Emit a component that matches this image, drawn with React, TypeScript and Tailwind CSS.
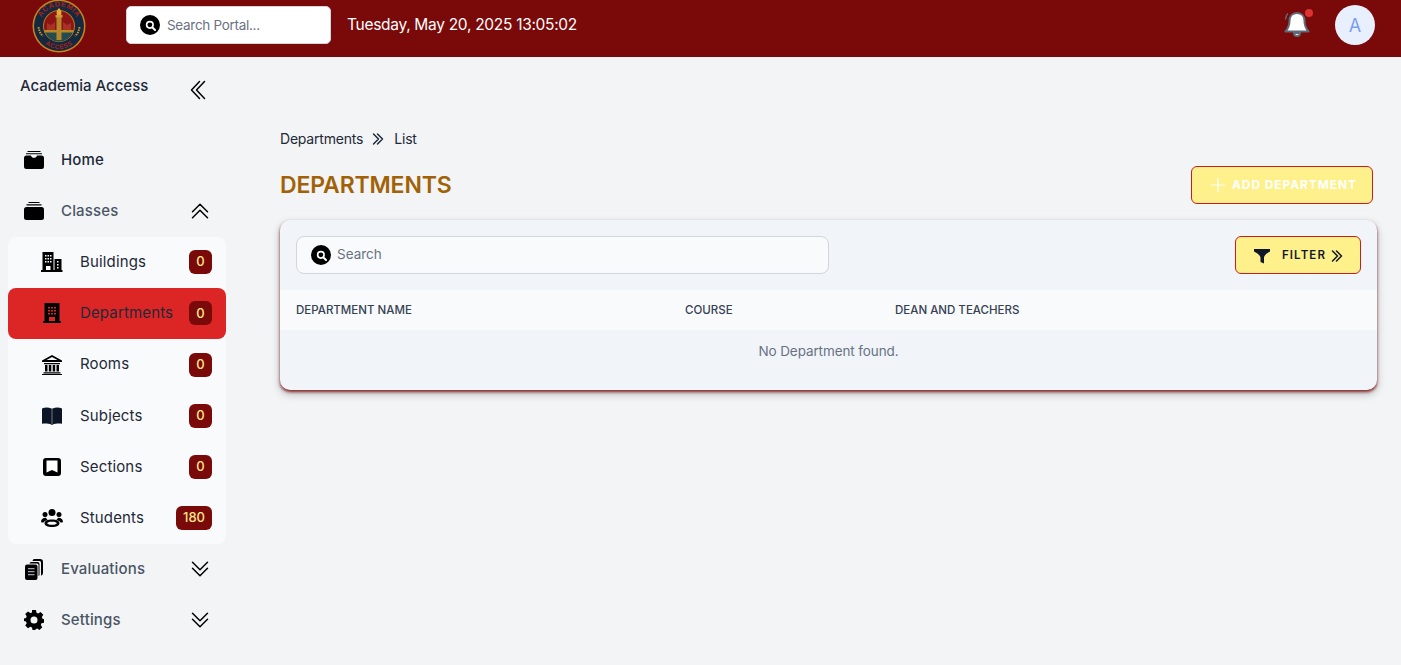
import { Plus } from 'lucide-react';
import { ReactNode } from 'react';

function Chevrons({ d, className, thick }: { d: string; className: string; thick?: boolean }) {
  return (
    <svg viewBox="0 0 24 24" className={className} fill="none" stroke="currentColor" strokeWidth={thick ? 2.2 : 1.5} strokeLinecap="round" strokeLinejoin="round">
      <path d={d} />
    </svg>
  );
}

const CHEV_LEFT = 'M12.500 3.500 4.500 12l8 8.500m5-17-8 8.500 8 8.500';
const CHEV_UP = 'M4.500 12.750 12 5.250l7.500 7.500m-15 6 7.500-7.500 7.500 7.500';
const CHEV_DOWN = 'M4.500 5.250 12 12.750l7.500-7.500m-15 6 7.500 7.500 7.500-7.500';
const CHEV_RIGHT = 'M5.250 4.500 12.750 12l-7.500 7.500m6-15 7.500 7.500-7.500 7.500';

function SearchDot() {
  return (
    <span className="w-[20px] h-[20px] rounded-full bg-black flex items-center justify-center shrink-0">
      <svg viewBox="0 0 12 12" className="w-[13px] h-[13px]" fill="none" stroke="white">
        <circle cx="5.4" cy="5.4" r="3" strokeWidth="1.5" />
        <path d="M7.8 7.8 10.2 10.2" strokeWidth="1.8" strokeLinecap="round" />
      </svg>
    </span>
  );
}

function Logo() {
  return (
    <svg viewBox="0 0 54 54" className="w-[54px] h-[54px]">
      <defs>
        <path id="logoTop" d="M7.500 27a19.500 19.500 0 0 1 39 0" />
        <path id="logoBottom" d="M4 27a23 23 0 0 0 46 0" />
      </defs>
      <circle cx="27" cy="27" r="26.500" fill="#c9851c" />
      <circle cx="27" cy="27" r="25" fill="#14293f" />
      <circle cx="27" cy="27" r="16" fill="#b97a1c" />
      <circle cx="27" cy="27" r="15" fill="#8d1414" />
      <path d="M13 33h28a15 15 0 0 1-28 0Z" fill="#244a52" />
      <path d="M12.500 31h29v2.500h-29Z" fill="#b98a22" />
      <path d="M15 31v-7l4 2 4-3v8ZM31 31v-8l4 3 4-2v7Z" fill="#a83226" />
      <rect x="24.500" y="18" width="5" height="23" fill="#b5862a" />
      <rect x="23.500" y="16" width="7" height="2.500" fill="#c99a36" />
      <path d="M27 9c2.500 2.500 3 4.500 2 7h-4c-1-2.500-.5-4.500 2-7Z" fill="#e3aa3a" />
      <text fontFamily="Liberation Sans, sans-serif" fontSize="7.500" fontWeight="700" fill="#a8201a" letterSpacing=".4">
        <textPath href="#logoTop" startOffset="50%" textAnchor="middle">ACADEMIA</textPath>
      </text>
      <text fontFamily="Liberation Sans, sans-serif" fontSize="6.500" fontWeight="700" fill="#a8201a" letterSpacing=".5">
        <textPath href="#logoBottom" startOffset="50%" textAnchor="middle">ACCESS</textPath>
      </text>
      <path d="M6.500 28c.5 4 2 7 4.500 9M47.500 28c-.5 4-2 7-4.500 9" fill="none" stroke="#c9941f" strokeWidth="2" strokeDasharray="1.500 1" />
    </svg>
  );
}

function HomeIcon() {
  return (
    <svg viewBox="0 0 20 18" className="w-[20px] h-[18px]" fill="black">
      <path d="M3.500 0h13v1h-13ZM2 2.200h16v1.100H2Z" />
      <path d="M2.500 4.500H7c.4 1.500 1.500 2.300 3 2.300s2.600-.8 3-2.300h4.500A2.500 2.500 0 0 1 20 7v8.500a2.500 2.500 0 0 1-2.500 2.500h-15A2.500 2.500 0 0 1 0 15.500V7a2.500 2.500 0 0 1 2.500-2.500Z" />
    </svg>
  );
}

function ClassesIcon() {
  return (
    <svg viewBox="0 0 20 18" className="w-[20px] h-[18px]" fill="black">
      <path d="M4.500 0h11v1.100h-11ZM2.500 2.200h15v1.300h-15Z" />
      <path d="M2.500 5h15A2.500 2.500 0 0 1 20 7.500v8a2.500 2.500 0 0 1-2.500 2.500h-15A2.500 2.500 0 0 1 0 15.500v-8A2.500 2.500 0 0 1 2.500 5Z" />
    </svg>
  );
}

function BuildingsIcon() {
  return (
    <svg viewBox="0 0 22 20" className="w-[22px] h-[20px]">
      <path d="M1.500 0h11v18h1v-11h7v11h1v2H0v-2h1.500Z" fill="black" />
      <path d="M4 3h1.500v1.500H4ZM6.500 3H8v1.500H6.500ZM9 3h1.500v1.500H9ZM4 6h1.500v1.500H4ZM6.500 6H8v1.500H6.500ZM9 6h1.500v1.500H9ZM4 9h1.500v1.500H4ZM6.500 9H8v1.500H6.500ZM9 9h1.500v1.500H9ZM5 14h4.500v4H5ZM16 9h1.500v1.500H16ZM16 12h1.500v1.500H16ZM16 15h1.500v1.500H16Z" fill="white" />
    </svg>
  );
}

function DepartmentIcon() {
  return (
    <svg viewBox="0 0 18 20" className="w-[18px] h-[20px]">
      <path d="M1.500 0h15v18H18v2H0v-2h1.500Z" fill="black" />
      <path d="M5 4h2v1.500H5ZM8 4h2v1.500H8ZM11 4h2v1.500h-2ZM5 7h2v1.500H5ZM8 7h2v1.500H8ZM11 7h2v1.500h-2ZM5 10h2v1.500H5ZM8 10h2v1.500H8ZM11 10h2v1.500h-2ZM6 14h6v4H6Z" fill="#dc2626" />
    </svg>
  );
}

function RoomsIcon() {
  return (
    <svg viewBox="0 0 20 20" className="w-[20px] h-[20px]" fill="black">
      <path d="M10 0 20 5.500V7H0V5.500ZM10 2 4.500 5h11Z" fillRule="evenodd" />
      <path d="M2 8h16v1.200H2ZM3 10h2.500v6.500H3ZM6.800 10h2.500v6.500H6.800ZM10.700 10h2.500v6.500h-2.500ZM14.500 10H17v6.500h-2.500ZM1.500 17.300h17v1.100h-17ZM0 19h20v1H0Z" />
    </svg>
  );
}

function SubjectsIcon() {
  return (
    <svg viewBox="0 0 20 18" className="w-[20px] h-[18px]">
      <path d="M0 1.500C3 .3 6.500 .3 9.300 1.500V17.500C6.500 16.300 3 16.300 0 16.700ZM10.700 1.500C13.500 .3 17 .3 20 1.500V16.700C17 16.300 13.500 16.300 10.700 17.500Z" fill="#0b1526" />
      <path d="M9.300 1.500h1.400v16.500l-.7.400-.7-.4Z" fill="#111827" />
    </svg>
  );
}

function SectionsIcon() {
  return (
    <svg viewBox="0 0 18 18" className="w-[18px] h-[18px]">
      <path d="M3 0h12a3 3 0 0 1 3 3v12a3 3 0 0 1-3 3H3a3 3 0 0 1-3-3V3a3 3 0 0 1 3-3Z" fill="black" />
      <path d="M3.500 2.500h11v12L9 12l-5.500 2.500Z" fill="white" />
    </svg>
  );
}

function StudentsIcon() {
  return (
    <svg viewBox="0 0 22 18" className="w-[22px] h-[18px]" fill="black">
      <circle cx="11" cy="3.500" r="3.500" />
      <circle cx="4" cy="5.500" r="2.500" />
      <circle cx="18" cy="5.500" r="2.500" />
      <path d="M0 12.500C.5 9.500 2.500 8.500 5 8.700 5.500 9.800 6 10.500 7 11 4.500 11.500 3 12.300 2.500 13.500 1 13.800 0 13.300 0 12.500ZM22 12.500c-.5-3-2.500-4-5-3.800-.5 1.100-1 1.800-2 2.300 2.500.5 4 1.300 4.500 2.500 1.500.3 2.500-.2 2.500-1Z" />
      <path d="M11 10.500c4.500 0 7.500 1.500 7.500 3.800S15.500 18 11 18s-7.500-1.400-7.500-3.700 3-3.800 7.500-3.800Zm0 2.300c-3 0-4.800.6-4.800 1.500s1.800 1.500 4.800 1.500 4.800-.6 4.800-1.500-1.800-1.500-4.800-1.500Z" fillRule="evenodd" />
    </svg>
  );
}

function EvaluationsIcon() {
  return (
    <svg viewBox="0 0 18 21" className="w-[18px] h-[21px]">
      <path d="M9 0h6a3 3 0 0 1 3 3v11a3 3 0 0 1-2 2.800V3.500A1.500 1.500 0 0 0 14.500 2H7.500A2.500 2.500 0 0 1 9 0Z" fill="black" />
      <path d="M6 3h6.500a2 2 0 0 1 2 2v10.500a2 2 0 0 1-1 1.700V6a1.500 1.500 0 0 0-1.500-1.500H4.500A2 2 0 0 1 6 3Z" fill="black" />
      <path d="M2 5.500h8.500a2 2 0 0 1 2 2V19a2 2 0 0 1-2 2H2a2 2 0 0 1-2-2V7.500a2 2 0 0 1 2-2Z" fill="black" />
      <path d="M3 9h6.500v1.300H3ZM3 12h6.500v1.300H3ZM3 15h6.500v1.300H3Z" fill="#9ca3af" />
    </svg>
  );
}

function GearIcon() {
  return (
    <svg viewBox="0 0 20 20" className="w-[20px] h-[20px]">
      <path fill="black" fillRule="evenodd" d="M8 0h4l.5 2.700 1.700.7L16.500 2l2.800 2.800-1.500 2.300.7 1.700L20 9.300v3.400l-2.500.5-.7 1.700 1.500 2.300-2.800 2.800-2.300-1.500-1.700.7L11.500 20h-3l-.5-2.500-1.700-.7L4 18.300 1.200 15.500l1.500-2.300-.7-1.700L0 11V8.500l2-.5.7-1.700L1.200 4 4 1.500l2.300 1.500L8 2.500ZM10 6.500a3.500 3.500 0 1 0 0 7 3.500 3.500 0 0 0 0-7Z" />
    </svg>
  );
}

function FunnelIcon() {
  return (
    <svg viewBox="0 0 16 16" className="w-[16px] h-[16px]">
      <path d="M0 1h16v2.500C13 5 10.500 7 10 9.500v6L6.500 14V9.500C6 7 3 5 0 3.500Z" fill="#0f172a" />
    </svg>
  );
}

function Bell() {
  return (
    <svg viewBox="0 0 28 32" className="w-[28px] h-[32px]">
      <path d="M11 24a3 3 0 0 0 6 0Z" fill="white" stroke="#5f6b7a" strokeWidth="2" />
      <path d="M14 4c-5 0-7.500 3.500-7.500 8 0 4.500-1.500 7.500-4 10.500h23c-2.500-3-4-6-4-10.500 0-4.500-2.500-8-7.500-8Z" fill="white" stroke="#5f6b7a" strokeWidth="2" strokeLinejoin="round" />
      <path d="M2.500 10.500c.2-2.500 1-4.500 2.300-6" fill="none" stroke="#5f6b7a" strokeWidth="1.300" />
    </svg>
  );
}

function Header() {
  return (
    <header className="h-[57px] bg-[#7a0909] flex items-center shrink-0">
      <div className="ml-[32px] -mt-[6px] w-[54px] h-[54px] shrink-0">
        <Logo />
      </div>
      <div className="ml-[40px] -mt-[7px] w-[205px] h-[38px] bg-white rounded-[5px] border border-gray-300 flex items-center pl-[13px] gap-[7px]">
        <SearchDot />
        <span className="text-[13.5px] text-gray-500 tracking-[-0.3px]">Search Portal...</span>
      </div>
      <div className="ml-[16px] -mt-[8px] text-white text-[15.5px] tracking-[-0.3px]">Tuesday, May 20, 2025 13:05:02</div>
      <div className="ml-auto mr-[26px] -mt-[7px] flex items-center gap-[24px]">
        <div className="relative w-[28px] h-[32px]">
          <Bell />
          <span className="absolute right-[-2px] top-0 w-[8px] h-[8px] rounded-full bg-[#dc3232]" />
        </div>
        <div className="w-[40px] h-[40px] rounded-full bg-[#e8f0fe] text-[#7c9cf5] text-[18px] flex items-center justify-center">A</div>
      </div>
    </header>
  );
}

function NavTop({ icon, label, dark, chevron }: { icon: ReactNode; label: string; dark?: boolean; chevron?: string }) {
  return (
    <div className="h-[51px] flex items-center">
      <div className="w-[20px] ml-[24px] flex justify-center shrink-0">{icon}</div>
      <span className={`ml-[17px] text-[15px] tracking-[0.15px] font-medium ${dark ? 'text-gray-800' : 'text-gray-600'}`}>{label}</span>
      {chevron && <Chevrons d={chevron} className="ml-auto mr-[22px] w-[24px] h-[24px] text-black" />}
    </div>
  );
}

function NavSub({ icon, label, count, active }: { icon: ReactNode; label: string; count: string; active?: boolean }) {
  return (
    <div className={`h-[51.2px] flex items-center rounded-[8px] pr-[14px] ${active ? 'bg-[#dc2626]' : ''}`}>
      <div className="w-[22px] ml-[33px] flex justify-center shrink-0">{icon}</div>
      <span className="ml-[17px] text-[15px] tracking-[0.15px] text-gray-800">{label}</span>
      <span className="ml-auto h-[24px] min-w-[23px] px-[7px] rounded-[6px] bg-[#7a0909] text-[#fde68a] text-[13px] font-medium flex items-center justify-center">{count}</span>
    </div>
  );
}

function Sidebar() {
  return (
    <aside className="w-[234px] shrink-0 pt-[19px]">
      <div className="flex items-start h-[58.6px]">
        <span className="ml-[20px] text-[15px] font-medium text-gray-800 leading-[20px]">Academia Access</span>
        <Chevrons d={CHEV_LEFT} className="ml-auto mr-[23px] mt-[2px] w-[24px] h-[24px] text-black" />
      </div>
      <NavTop icon={<HomeIcon />} label="Home" dark />
      <NavTop icon={<ClassesIcon />} label="Classes" chevron={CHEV_UP} />
      <div className="mx-[8px] bg-[#f9fafb] rounded-[8px]">
        <NavSub icon={<BuildingsIcon />} label="Buildings" count="0" />
        <NavSub icon={<DepartmentIcon />} label="Departments" count="0" active />
        <NavSub icon={<RoomsIcon />} label="Rooms" count="0" />
        <NavSub icon={<SubjectsIcon />} label="Subjects" count="0" />
        <NavSub icon={<SectionsIcon />} label="Sections" count="0" />
        <NavSub icon={<StudentsIcon />} label="Students" count="180" />
      </div>
      <NavTop icon={<EvaluationsIcon />} label="Evaluations" chevron={CHEV_DOWN} />
      <NavTop icon={<GearIcon />} label="Settings" chevron={CHEV_DOWN} />
    </aside>
  );
}

function Main() {
  return (
    <main className="flex-1 min-w-0 pl-[46px] pr-[24px] pt-[72px]">
      <div className="flex items-center text-[14px] tracking-[-0.2px] text-gray-800 leading-[20px]">
        <span>Departments</span>
        <Chevrons d={CHEV_RIGHT} className="ml-[7px] mr-[8px] w-[16px] h-[16px]" thick />
        <span>List</span>
      </div>
      <div className="mt-[17px] flex items-center justify-between h-[38px]">
        <h1 className="text-[23px] font-semibold tracking-[-0.15px] text-[#a16207]">DEPARTMENTS</h1>
        <button className="mr-[4px] w-[182px] h-[38px] rounded-[6px] bg-[#fef08a] border border-[#c81e1e] text-white text-[12px] font-bold tracking-[0.9px] flex items-center justify-center gap-[3px]">
          <Plus className="w-[22px] h-[22px]" strokeWidth={1.3} />
          ADD DEPARTMENT
        </button>
      </div>
      <section className="mt-[16px] h-[170px] bg-[#f1f5f9] rounded-[10px] overflow-hidden shadow-[0_2px_3px_rgba(127,29,29,0.9),0_4px_8px_rgba(0,0,0,0.25)]">
        <div className="h-[70px] flex items-center justify-between px-[16px]">
          <div className="w-[533px] h-[38px] rounded-[8px] bg-[#f8fafc] border border-gray-300 flex items-center pl-[14px] gap-[6px]">
            <SearchDot />
            <span className="text-[13.5px] text-gray-500 -mt-[2px]">Search</span>
          </div>
          <button className="w-[126px] h-[38px] rounded-[6px] bg-[#fef08a] border border-[#c81e1e] text-gray-900 text-[11.5px] font-semibold tracking-[1.1px] flex items-center justify-center pt-[1px] pl-[3px]">
            <FunnelIcon />
            <span className="ml-[12px]">FILTER</span>
            <Chevrons d={CHEV_RIGHT} className="ml-[3px] w-[16px] h-[16px]" thick />
          </button>
        </div>
        <div className="h-[40px] bg-[#f8fafc] grid grid-cols-[389px_210px_1fr] items-center pl-[16px] pt-[2px] text-[11.5px] font-medium text-gray-700">
          <span>DEPARTMENT NAME</span>
          <span>COURSE</span>
          <span>DEAN AND TEACHERS</span>
        </div>
        <div className="h-[42px] flex items-center justify-center text-[13.5px] tracking-[-0.1px] text-gray-500">No Department found.</div>
      </section>
    </main>
  );
}

export default function App() {
  return (
    <div className="w-full h-[665px] overflow-hidden flex flex-col bg-[#f3f4f6] font-['Inter',sans-serif]">
      <Header />
      <div className="flex flex-1 min-h-0">
        <Sidebar />
        <Main />
      </div>
    </div>
  );
}
